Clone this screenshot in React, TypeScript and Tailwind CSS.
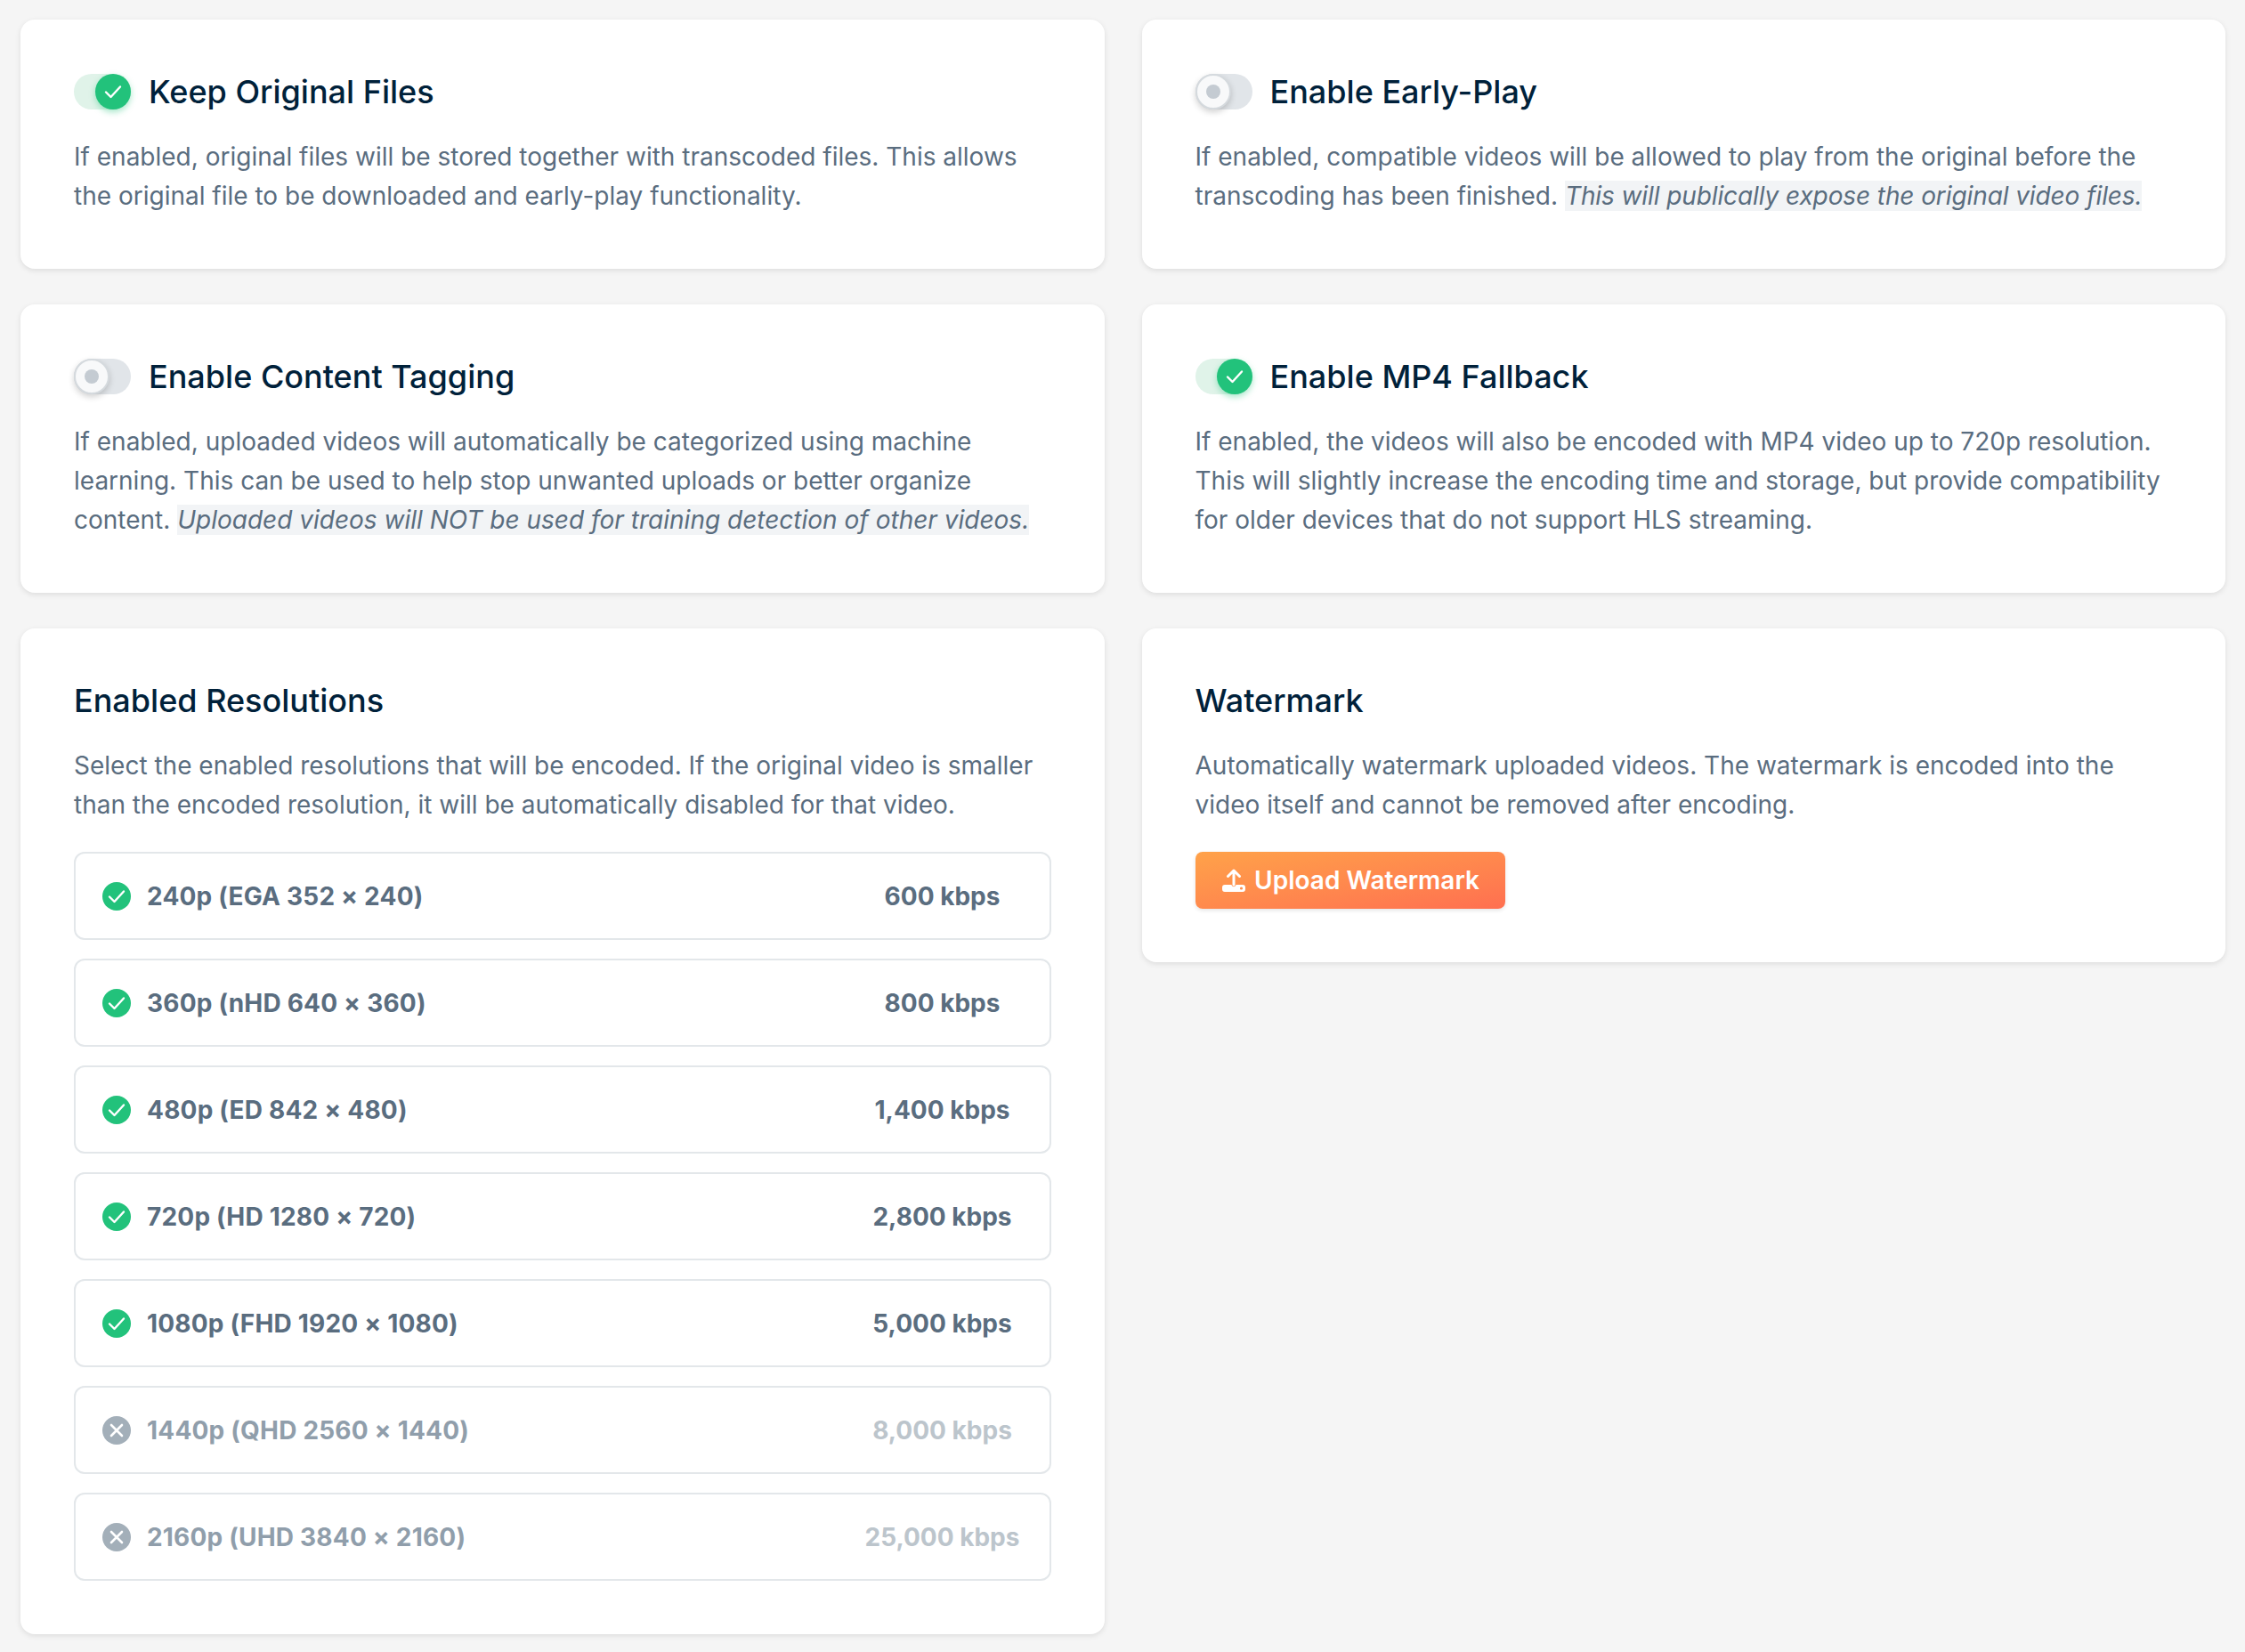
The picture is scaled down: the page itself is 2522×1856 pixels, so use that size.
const fontStack = { fontFamily: 'Inter, "Noto Sans", sans-serif' }

function CheckIcon() {
  return (
    <svg width="24" height="24" viewBox="0 0 24 24" fill="none" stroke="#fff" strokeWidth="2.4" strokeLinecap="round" strokeLinejoin="round">
      <path d="M4 12.5 9.5 18 20 6.5" />
    </svg>
  )
}

function Toggle({ on }: { on: boolean }) {
  if (on) {
    return (
      <span className="relative block h-10 w-16 shrink-0 rounded-full bg-[#e0f3e9]">
        <span className="absolute right-0 top-0 flex h-10 w-10 items-center justify-center rounded-full bg-[#22c27b] shadow-[0_3px_7px_rgba(34,194,123,0.4)]">
          <CheckIcon />
        </span>
      </span>
    )
  }
  return (
    <span className="relative block h-10 w-16 shrink-0 rounded-full bg-[#e1e5e9]">
      <span className="absolute left-0 top-0 flex h-10 w-10 items-center justify-center rounded-full border-2 border-[#d5dade] bg-[#f8f9fa] shadow-[0_3px_7px_rgba(0,0,0,0.18)]">
        <span className="h-4 w-4 rounded-full bg-[#c4cbd2]" />
      </span>
    </span>
  )
}

function Card({ children }: { children: React.ReactNode }) {
  return <div className="rounded-2xl bg-white px-[60px] pb-[60px] pt-[61px] shadow-[0_2px_6px_rgba(0,0,0,0.1)]">{children}</div>
}

function Body({ children }: { children: React.ReactNode }) {
  return <p className="text-[28px] leading-[44px] text-[#5a6d7f]">{children}</p>
}

function Note({ children, tight = false }: { children: React.ReactNode; tight?: boolean }) {
  return <em className={`bg-[#f2f4f6] italic ${tight ? 'tracking-[-0.1px]' : ''}`}>{children}</em>
}

function SettingCard({ title, on, children }: { title: string; on: boolean; children: React.ReactNode }) {
  return (
    <Card>
      <div className="mb-[31px] flex h-10 items-center gap-5">
        <Toggle on={on} />
        <h3 className="text-[36px] font-medium leading-[42px] text-[#00213a]">{title}</h3>
      </div>
      <Body>{children}</Body>
    </Card>
  )
}

const resolutions = [
  { label: '240p (EGA 352 × 240)', rate: '600 kbps', on: true },
  { label: '360p (nHD 640 × 360)', rate: '800 kbps', on: true },
  { label: '480p (ED 842 × 480)', rate: '1,400 kbps', on: true },
  { label: '720p (HD 1280 × 720)', rate: '2,800 kbps', on: true },
  { label: '1080p (FHD 1920 × 1080)', rate: '5,000 kbps', on: true },
  { label: '1440p (QHD 2560 × 1440)', rate: '8,000 kbps', on: false },
  { label: '2160p (UHD 3840 × 2160)', rate: '25,000 kbps', on: false },
]

function ResolutionRow({ label, rate, on }: { label: string; rate: string; on: boolean }) {
  return (
    <div className="flex h-[99px] items-center rounded-xl border-2 border-[#e3e7ea] pl-[30px]">
      <span className={`flex h-8 w-8 shrink-0 items-center justify-center rounded-full ${on ? 'bg-[#22c27b]' : 'bg-[#a3afb9]'}`}>
        {on ? (
          <CheckIcon />
        ) : (
          <svg width="18" height="18" viewBox="0 0 18 18" fill="none" stroke="#fff" strokeWidth="2.6" strokeLinecap="round">
            <path d="M3 3 15 15M15 3 3 15" />
          </svg>
        )}
      </span>
      <span className={`ml-[18px] flex-1 text-[28px] font-bold tracking-[0.2px] ${on ? 'text-[#5a6d7f]' : 'text-[#909eab]'}`}>{label}</span>
      <span className={`w-[240px] text-center text-[28px] font-bold ${on ? 'text-[#5a6d7f]' : 'text-[#bcc5cc]'}`}>{rate}</span>
    </div>
  )
}

function UploadIcon() {
  return (
    <svg width="26" height="26" viewBox="0 0 26 26" fill="none">
      <path d="M13 18V2.5M6.5 8.5 13 2 19.5 8.5" stroke="#fff" strokeWidth="3" strokeLinecap="round" strokeLinejoin="round" />
      <path fillRule="evenodd" clipRule="evenodd" fill="#fff" d="M3 18h7.5c.3 1.4 1.3 2.2 2.5 2.2s2.2-.8 2.5-2.2H23a3 3 0 0 1 3 3v2a3 3 0 0 1-3 3H3a3 3 0 0 1-3-3v-2a3 3 0 0 1 3-3Zm18.5 2.4a1.6 1.6 0 1 0 0 3.2 1.6 1.6 0 0 0 0-3.2Z" />
    </svg>
  )
}

export default function App() {
  return (
    <div className="min-h-[1856px] bg-[#f5f5f5] pb-5 pl-[23px] pr-[22px] pt-[22px]" style={fontStack}>
      <div className="grid grid-cols-2 items-start gap-x-[42px] gap-y-10">
        <SettingCard title="Keep Original Files" on>
          If enabled, original files will be stored together with transcoded files. This allows the original file to be downloaded and early-play functionality.
        </SettingCard>
        <SettingCard title="Enable Early-Play" on={false}>
          If enabled, compatible videos will be allowed to play from the original before the transcoding has been finished. <Note tight>This will publically expose the original video files.</Note>
        </SettingCard>
        <SettingCard title="Enable Content Tagging" on={false}>
          If enabled, uploaded videos will automatically be categorized using machine learning. This can be used to help stop unwanted uploads or better organize content. <Note>Uploaded videos will NOT be used for training detection of other videos.</Note>
        </SettingCard>
        <SettingCard title="Enable MP4 Fallback" on>
          If enabled, the videos will also be encoded with MP4 video up to 720p resolution. This will slightly increase the encoding time and storage, but provide compatibility for older devices that do not support HLS streaming.
        </SettingCard>
        <Card>
          <h3 className="mb-[31px] text-[36px] font-medium leading-10 text-[#00213a]">Enabled Resolutions</h3>
          <Body>Select the enabled resolutions that will be encoded. If the original video is smaller than the encoded resolution, it will be automatically disabled for that video.</Body>
          <div className="mt-[31px] flex flex-col gap-[21px]">
            {resolutions.map((r) => (
              <ResolutionRow key={r.label} {...r} />
            ))}
          </div>
        </Card>
        <Card>
          <h3 className="mb-[31px] text-[36px] font-medium leading-10 text-[#00213a]">Watermark</h3>
          <Body>Automatically watermark uploaded videos. The watermark is encoded into the video itself and cannot be removed after encoding.</Body>
          <button className="mt-[31px] flex h-16 w-[348px] items-center justify-center gap-[10px] rounded-lg bg-gradient-to-br from-[#ffa249] to-[#ff6f50] pl-[2px] text-[28px] font-semibold text-white shadow-[0_2px_4px_rgba(0,0,0,0.1)]">
            <UploadIcon />
            Upload Watermark
          </button>
        </Card>
      </div>
    </div>
  )
}
